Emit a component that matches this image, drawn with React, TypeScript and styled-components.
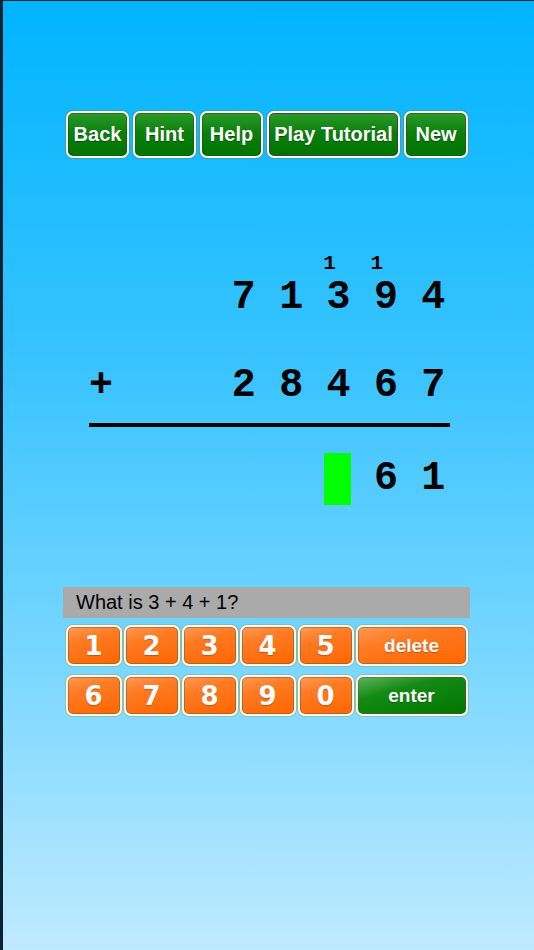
import styled, { createGlobalStyle } from 'styled-components';

const GlobalStyle = createGlobalStyle`
  html, body {
    margin: 0;
    padding: 0;
  }
  body {
    font-family: "Liberation Sans", Arial, sans-serif;
  }
`;

const Screen = styled.div`
  box-sizing: border-box;
  width: 534px;
  height: 950px;
  overflow: hidden;
  display: flex;
  flex-direction: column;
  align-items: center;
  border-left: 3px solid #0b2433;
  border-top: 1px solid #0b2433;
  background: linear-gradient(180deg, #00b4ff 0%, #3cc4ff 40%, #7ad7ff 70%, #bfeaff 100%);
`;

const Toolbar = styled.div`
  display: flex;
  gap: 4px;
  margin-top: 110px;
  margin-left: -3px;
`;

const GreenButton = styled.button<{ $width: number; $pressed?: boolean }>`
  box-sizing: border-box;
  width: ${({ $width }) => $width}px;
  height: 47px;
  padding: 0;
  border: 2px solid #fffbe3;
  border-radius: 7px;
  background: linear-gradient(180deg, #2b9b2b 0%, #0b800b 45%, #007300 100%);
  box-shadow: 0 0 0 1px rgba(120, 110, 70, 0.35),
    inset 0 0 0 1px ${({ $pressed }) => ($pressed ? 'rgba(60, 50, 110, 0.8)' : 'rgba(40, 70, 40, 0.5)')};
  color: #fff;
  font-family: "Liberation Sans", Arial, sans-serif;
  font-weight: bold;
  font-size: 20px;
  text-shadow: 0 1px 1px rgba(0, 0, 0, 0.35);
`;

const Sum = styled.div`
  width: 368px;
  margin-top: 94px;
  margin-left: 9px;
  display: flex;
  flex-direction: column;
  font-family: "Liberation Mono", "Courier New", monospace;
  font-weight: bold;
  color: #000;
`;

const Row = styled.div<{ $height: number; $gap?: number }>`
  display: flex;
  align-items: center;
  height: ${({ $height }) => $height}px;
  margin-top: ${({ $gap }) => $gap ?? 0}px;
`;

const Operator = styled.div`
  width: 24px;
  text-align: center;
  font-size: 40px;
  line-height: 1;
`;

const Digits = styled.div`
  display: flex;
  margin-left: auto;
`;

const Cell = styled.div<{ $small?: boolean; $shift?: number }>`
  width: 47.4px;
  display: flex;
  justify-content: center;
  align-items: center;
  font-size: ${({ $small }) => ($small ? 21 : 40)}px;
  line-height: 1;
  transform: translate(${({ $shift }) => $shift ?? 0}px, ${({ $small }) => ($small ? -2 : 0)}px);
`;

const Rule = styled.div`
  width: 361px;
  height: 4px;
  margin-top: 17px;
  background: #000;
`;

const Blank = styled.div`
  width: 27px;
  height: 52px;
  background: #00ff00;
  transform: translateX(-1px);
`;

const Question = styled.div`
  box-sizing: border-box;
  width: 407px;
  height: 31px;
  margin-top: 82px;
  margin-left: -4px;
  padding-left: 13px;
  display: flex;
  align-items: center;
  background: #aaaaaa;
  color: #000;
  font-size: 20px;
`;

const Keypad = styled.div`
  display: grid;
  grid-template-columns: repeat(5, 56px) 112px;
  grid-auto-rows: 41px;
  column-gap: 2px;
  row-gap: 9px;
  margin-top: 7px;
  margin-left: -4px;
`;

const Key = styled.button<{ $tone: 'orange' | 'green'; $word?: boolean }>`
  box-sizing: border-box;
  padding: 0;
  border: 2px solid #fffbe0;
  border-radius: 7px;
  background: ${({ $tone }) =>
    $tone === 'orange'
      ? 'linear-gradient(165deg, #ff9a55 0%, #ff7a22 35%, #ff6600 100%)'
      : 'linear-gradient(165deg, #5fb45f 0%, #138a13 35%, #007600 100%)'};
  box-shadow: 0 0 0 1px rgba(150, 140, 90, 0.35), inset 0 0 0 1px rgba(90, 80, 90, 0.45);
  color: #fff;
  font-family: ${({ $word }) =>
    $word ? '"Liberation Sans", Arial, sans-serif' : '"DejaVu Sans", Verdana, sans-serif'};
  font-weight: bold;
  font-size: ${({ $word }) => ($word ? 19 : 26)}px;
  text-shadow: 0 1px 1px rgba(0, 0, 0, 0.25);
`;

const top = ['7', '1', '3', '9', '4'];
const bottom = ['2', '8', '4', '6', '7'];
const carries = ['', '', '1', '1', ''];

export default function App() {
  return (
    <Screen>
      <GlobalStyle />
      <Toolbar>
        <GreenButton $width={63}>Back</GreenButton>
        <GreenButton $width={63}>Hint</GreenButton>
        <GreenButton $width={63}>Help</GreenButton>
        <GreenButton $width={133} $pressed>Play Tutorial</GreenButton>
        <GreenButton $width={64}>New</GreenButton>
      </Toolbar>

      <Sum>
        <Row $height={26}>
          <Digits>
            {carries.map((c, i) => (
              <Cell key={i} $small $shift={-9}>{c}</Cell>
            ))}
          </Digits>
        </Row>
        <Row $height={40}>
          <Digits>
            {top.map((d, i) => (
              <Cell key={i}>{d}</Cell>
            ))}
          </Digits>
        </Row>
        <Row $height={40} $gap={48}>
          <Operator>+</Operator>
          <Digits>
            {bottom.map((d, i) => (
              <Cell key={i}>{d}</Cell>
            ))}
          </Digits>
        </Row>
        <Rule />
        <Row $height={52} $gap={26}>
          <Digits>
            <Cell />
            <Cell />
            <Cell><Blank /></Cell>
            <Cell>6</Cell>
            <Cell>1</Cell>
          </Digits>
        </Row>
      </Sum>

      <Question>What is 3 + 4 + 1?</Question>
      <Keypad>
        {['1', '2', '3', '4', '5'].map((k) => (
          <Key key={k} $tone="orange">{k}</Key>
        ))}
        <Key $tone="orange" $word>delete</Key>
        {['6', '7', '8', '9', '0'].map((k) => (
          <Key key={k} $tone="orange">{k}</Key>
        ))}
        <Key $tone="green" $word>enter</Key>
      </Keypad>
    </Screen>
  );
}
